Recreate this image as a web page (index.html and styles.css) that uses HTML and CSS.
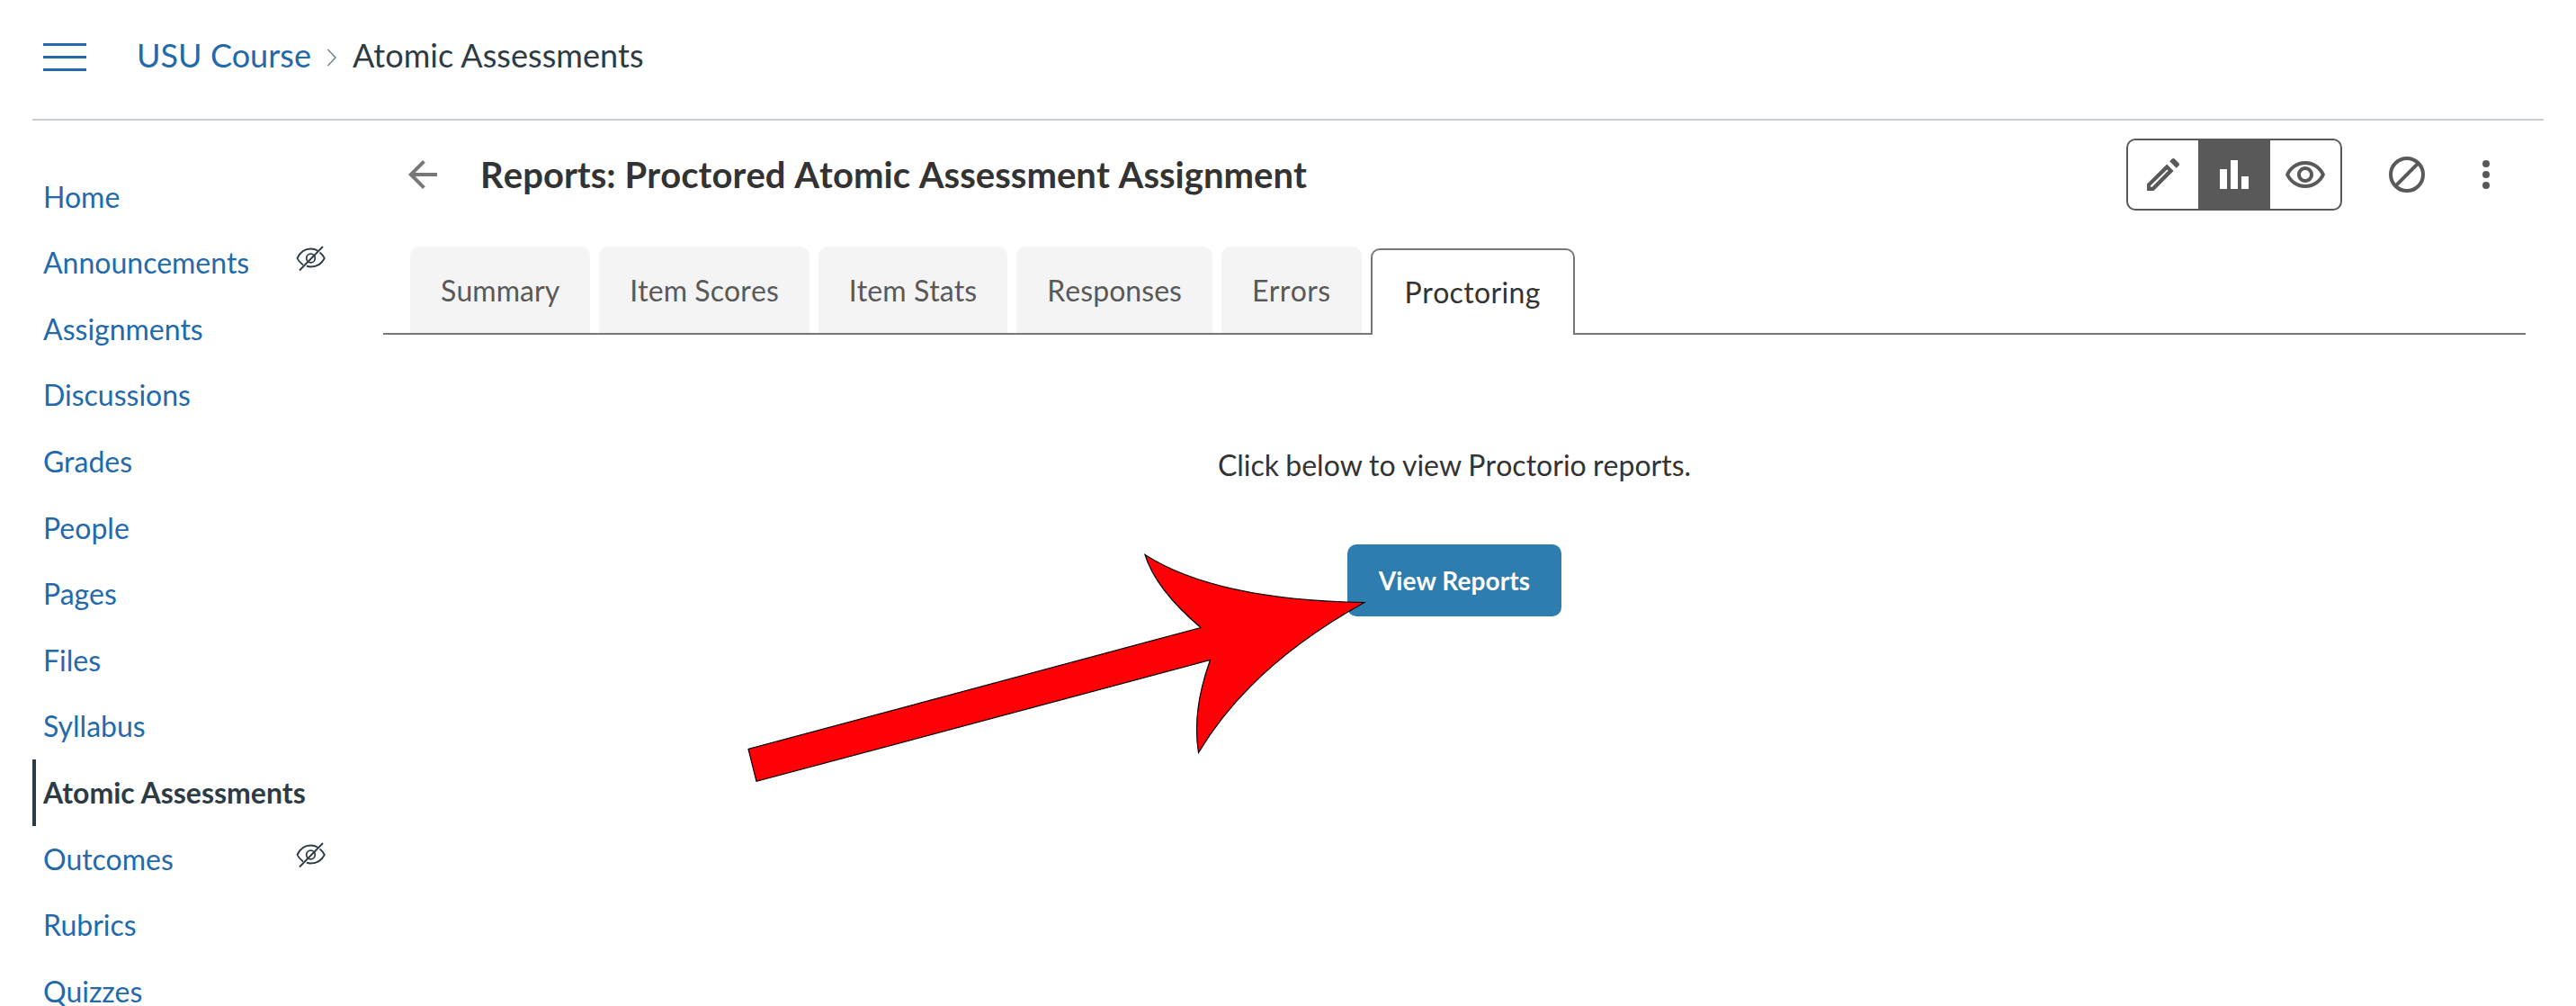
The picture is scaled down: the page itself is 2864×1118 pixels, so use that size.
FILE: index.html
```html
<!DOCTYPE html>
<html lang="en">
<head>
    <meta charset="utf-8">
    <title>Atomic Assessments</title>
    <link rel="stylesheet" href="styles.css">
</head>
<body>
    <header class="topbar">
        <button class="menu-toggle" aria-label="Toggle navigation">
            <span></span>
            <span></span>
            <span></span>
        </button>
        <nav class="breadcrumbs">
            <a href="#">USU Course</a>
            <svg class="crumb-arrow" viewBox="0 0 12 20"><path d="M1.5 1l8.5 9-8.5 9"/></svg>
            <span>Atomic Assessments</span>
        </nav>
    </header>

    <div class="layout">
        <nav class="course-nav">
            <a href="#">Home</a>
            <a href="#">Announcements
                <svg class="hidden-icon" viewBox="0 0 34 30"><path d="M24 5.500C22 4.200 19.500 3.500 16.500 3.500 10 3.500 4.500 7.500 1.500 14c1.500 3.300 3.900 5.600 6.500 7.500M26.500 7.500c2.200 1.700 4 3.900 5.300 6.500C29 19.500 23.500 23.500 16.500 23.500c-1.700 0-3.300-.3-4.700-.8M4 27.500L30 1"/><circle cx="16.500" cy="14" r="4.800"/></svg>
            </a>
            <a href="#">Assignments</a>
            <a href="#">Discussions</a>
            <a href="#">Grades</a>
            <a href="#">People</a>
            <a href="#">Pages</a>
            <a href="#">Files</a>
            <a href="#">Syllabus</a>
            <a href="#" class="active">Atomic Assessments</a>
            <a href="#">Outcomes
                <svg class="hidden-icon" viewBox="0 0 34 30"><path d="M24 5.500C22 4.200 19.500 3.500 16.500 3.500 10 3.500 4.500 7.500 1.500 14c1.500 3.300 3.900 5.600 6.500 7.500M26.500 7.500c2.200 1.700 4 3.900 5.300 6.500C29 19.500 23.500 23.500 16.500 23.500c-1.700 0-3.300-.3-4.700-.8M4 27.500L30 1"/><circle cx="16.500" cy="14" r="4.800"/></svg>
            </a>
            <a href="#">Rubrics</a>
            <a href="#">Quizzes</a>
        </nav>

        <main class="content">
            <div class="page-header">
                <svg class="icon back" viewBox="0 0 24 24"><path d="M20 11H7.830l5.590-5.590L12 4l-8 8 8 8 1.410-1.410L7.830 13H20v-2z"/></svg>
                <h1>Reports: Proctored Atomic Assessment Assignment</h1>
                <div class="view-switch">
                    <button aria-label="Edit">
                        <svg class="icon" viewBox="0 0 24 24"><path d="M14.200 9.200l.6.600L5.900 18.900H5v-.8l9.200-8.900M17.660 3c-.25 0-.51.1-.7.290L15.600 4.650l3.750 3.750 1.360-1.360c.39-.39.39-1.020 0-1.410l-2.340-2.340c-.2-.2-.45-.29-.71-.29zM14.060 6.190L3 17.250V21h3.750L17.810 9.940l-3.750-3.750z"/></svg>
                    </button>
                    <button class="selected" aria-label="Reports">
                        <svg class="icon" viewBox="0 0 24 24"><path d="M4 9h4v11H4zM10 4h4v16h-4zM16 13h4v7h-4z"/></svg>
                    </button>
                    <button aria-label="Preview">
                        <svg class="icon" viewBox="0 0 24 24"><path d="M12 6.500c3.790 0 7.170 2.130 8.820 5.500-1.650 3.370-5.020 5.500-8.820 5.500S4.830 15.370 3.180 12C4.830 8.630 8.210 6.500 12 6.500m0-2C7 4.500 2.730 7.610 1 12c1.730 4.390 6 7.500 11 7.500s9.270-3.110 11-7.500c-1.730-4.390-6-7.500-11-7.500zm0 5c1.380 0 2.500 1.120 2.500 2.500s-1.120 2.500-2.500 2.500-2.500-1.120-2.500-2.500 1.120-2.500 2.500-2.500m0-2c-2.480 0-4.500 2.020-4.500 4.500s2.020 4.500 4.500 4.500 4.500-2.020 4.500-4.500-2.020-4.500-4.500-4.500z"/></svg>
                    </button>
                </div>
                <svg class="icon unpublished" viewBox="0 0 24 24"><circle cx="12" cy="12" r="9"/><path d="M5.700 18.300L18.300 5.700"/></svg>
                <svg class="icon more" viewBox="0 0 24 24"><circle cx="12" cy="6" r="2"/><circle cx="12" cy="12" r="2"/><circle cx="12" cy="18" r="2"/></svg>
            </div>

            <div class="tabs">
                <a href="#" class="tab">Summary</a>
                <a href="#" class="tab">Item Scores</a>
                <a href="#" class="tab">Item Stats</a>
                <a href="#" class="tab">Responses</a>
                <a href="#" class="tab wide">Errors</a>
                <a href="#" class="tab wide current">Proctoring</a>
            </div>

            <section class="proctoring">
                <p>Click below to view Proctorio reports.</p>
                <button class="primary">View Reports</button>
            </section>
        </main>
    </div>

    <!-- pointer lying over the View Reports button -->
    <svg class="pointer" viewBox="820 600 710 280">
        <path d="M1517 669.500Q1352 667 1273 616.500Q1285 655 1335 697.500L832 832.500L841 868.300L1345.500 733.500Q1325 790 1332.500 836.500Q1390 740 1517 669.500Z"/>
    </svg>
</body>
</html>
```
FILE: styles.css
```css
* { box-sizing: border-box; }
body { margin: 0; height: 1118px; overflow: hidden; position: relative; background: #fff; color: #333; font-family: Lato, "Liberation Sans", sans-serif; font-size: 32px; }
a { color: #2369ab; text-decoration: none; }
button { font-family: inherit; border: 0; padding: 0; background: none; }

.topbar { display: flex; align-items: center; height: 134px; margin: 0 36px; padding: 0 12px 6px; border-bottom: 2px solid #c7cdd1; }
.menu-toggle { display: flex; flex-direction: column; gap: 11px; width: 48px; margin-right: 56px; }
.menu-toggle span { height: 3px; background: #2369ab; }
.breadcrumbs { display: flex; align-items: center; padding-bottom: 4px; font-size: 36px; letter-spacing: 0.05px; color: #2d3b45; }
.crumb-arrow { width: 12px; height: 20px; margin: 6px 17px 0 17px; fill: none; stroke: #73818c; stroke-width: 1.5; }

.layout { display: flex; }
.course-nav { width: 348px; margin-left: 36px; padding-top: 47.6px; flex: none; }
.course-nav a { display: flex; justify-content: space-between; padding: 16px 21px 16px 8px; border-left: 4px solid transparent; line-height: 1.3; white-space: nowrap; }
.course-nav .active { color: #2d3b45; border-left-color: #2d3b45; font-weight: bold; }
.hidden-icon { width: 34px; height: 30px; margin-top: 2px; fill: none; stroke: #2d3b45; stroke-width: 1.8; }

.content { flex: 1; margin: 0 56px 0 42px; font-kerning: none; }
.icon { display: block; width: 48px; height: 48px; fill: #595959; flex: none; }
.page-header { display: flex; align-items: center; height: 120px; padding: 0 20px; }
.page-header h1 { margin: 0 auto 0 40px; font-size: 40px; font-weight: bold; line-height: 48px; letter-spacing: 0.03px; }
.icon.back { fill: #777; }
.view-switch { display: flex; width: 240px; height: 80px; border: 2px solid #595959; border-radius: 10px; }
.view-switch button { display: flex; align-items: center; justify-content: center; width: 78px; }
.view-switch .selected { width: 80px; background: #595959; }
.view-switch .selected .icon { fill: #fff; }
.icon.unpublished { margin-left: 48px; fill: none; stroke: #595959; stroke-width: 2; }
.icon.more { margin-left: 40px; }

.tabs { display: flex; gap: 10px; margin-top: 20px; padding-left: 30px; height: 98px; border-bottom: 2px solid #777; }
.tab { padding: 0 34px; height: 96px; line-height: 98px; background: #f4f4f4; color: #595959; border-radius: 10px 10px 0 0; letter-spacing: 0.05px; }
.tab.wide { letter-spacing: 0.35px; }
.tab.current { height: 96px; margin-top: 2px; padding: 0 36px; line-height: 94px; background: #fff; color: #333; border: 2px solid #777; border-bottom: 0; }

.proctoring { display: flex; flex-direction: column; align-items: center; padding-top: 121px; }
.proctoring p { margin: 0; line-height: 48px; word-spacing: -1px; }
.primary { width: 238px; height: 80px; margin-top: 64px; border-radius: 10px; background: #2d7dae; color: #fff; font-size: 28px; font-weight: bold; letter-spacing: 0.1px; }

.pointer { position: absolute; left: 820px; top: 600px; width: 710px; height: 280px; fill: #ff0006; stroke: #000; stroke-width: 1.2; }
```
